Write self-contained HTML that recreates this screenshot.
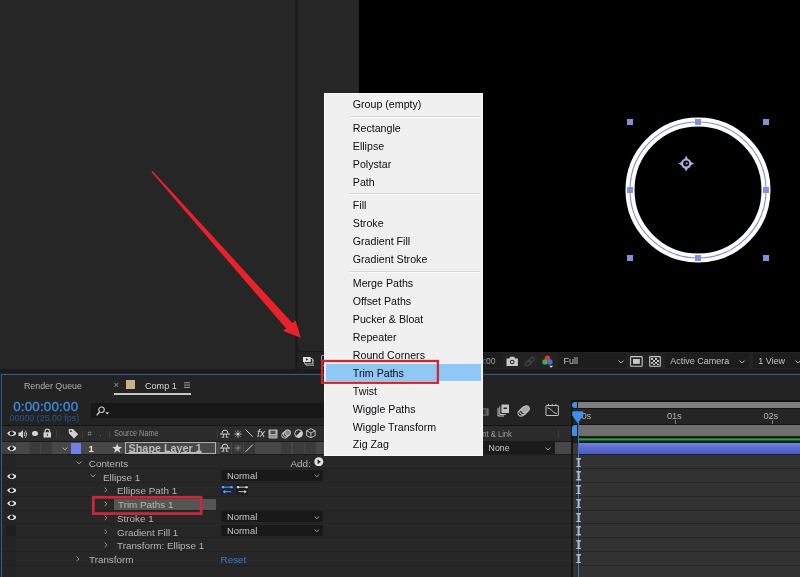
<!DOCTYPE html>
<html>
<head>
<meta charset="utf-8">
<title>After Effects - Add Trim Paths</title>
<style>
*{margin:0;padding:0;box-sizing:border-box;}
html,body{width:800px;height:577px;overflow:hidden;background:#262626;}
body{position:relative;font-family:"Liberation Sans",sans-serif;color:#b4b4b4;}
#root{position:absolute;left:0;top:0;width:800px;height:577px;will-change:transform;}
.a{position:absolute;}
.t{position:absolute;white-space:nowrap;line-height:1;}
#divider{left:295px;top:0;width:3px;height:370px;background:#1b1b1b;}
#viewer{left:359px;top:0;width:441px;height:351.6px;background:#000;}
#vfoot{left:298px;top:352px;width:502px;height:18px;background:#232323;}
#vfootline{left:298px;top:351.3px;width:61px;height:1px;background:#171717;}
#gap{left:0;top:369.4px;width:800px;height:4.4px;background:#1b1b1b;}
#tl{left:0;top:373px;width:800px;height:204px;background:#232323;}
#tlblueT{left:1px;top:373.7px;width:799px;height:1.4px;background:#2d5892;}
#tlblueL{left:0.9px;top:373.7px;width:1.2px;height:204px;background:#2d5892;}
.rl{position:absolute;left:2px;width:569px;height:1px;background:#212121;}
.rt{position:absolute;left:573px;width:227px;height:1px;background:#262626;}
#tlleft{left:2px;top:455px;width:569px;height:122px;background:#272727;}
#track{left:573px;top:455px;width:227px;height:122px;background:#323232;}
#tdiv{left:571px;top:400px;width:1.6px;height:177px;background:#141414;}
.lt{position:absolute;white-space:nowrap;font-size:9.85px;line-height:13.75px;height:13.75px;color:#b6b6b6;}
#tabline{left:113.8px;top:393px;width:77px;height:1.5px;background:#c6c6c6;}
#search{left:90.5px;top:403px;width:380px;height:14.5px;background:#171717;border-radius:2px;}
#hdrline{left:2px;top:424.6px;width:569px;height:1.2px;background:#151515;}
#hdr{left:2px;top:425.8px;width:569px;height:15px;background:#2b2b2b;}
#hdrline2{left:2px;top:440.8px;width:569px;height:1px;background:#1a1a1a;}
#lrow{left:2px;top:441.8px;width:569px;height:12.6px;background:#474747;}
#lrowline{left:2px;top:454.4px;width:569px;height:1px;background:#1c1c1c;}
.cell{position:absolute;top:441.8px;height:12.6px;background:#3b3b3b;}
.vs{position:absolute;top:429.6px;width:1px;height:8.6px;background:#3c3c3c;}
.dd{position:absolute;left:220.8px;width:102.4px;height:11.2px;background:#191919;border-radius:1.5px;}
.ddt{position:absolute;font-size:9.9px;line-height:10.8px;color:#c6c6c6;white-space:nowrap;transform:scaleX(0.95);transform-origin:0 50%;}
.vb{position:absolute;top:353.4px;height:14.6px;background:#1d1d1d;border-radius:1.5px;}
.vt{position:absolute;top:357.4px;font-size:9px;line-height:1;color:#c4c4c4;white-space:nowrap;}
#menu{left:324px;top:92.8px;width:159px;height:363px;background:#f0f0f0;border:1px solid #f9f9f9;}
.mi{position:absolute;left:27.8px;margin-top:0.1px;font-size:10.65px;letter-spacing:0;color:#0a0a10;white-space:nowrap;line-height:18px;height:18px;}
.ms{position:absolute;left:24.5px;width:130.6px;height:1px;background:#d7d7d7;border-bottom:0.6px solid #fbfbfb;box-sizing:content-box;}
#mhl{left:0.5px;top:270px;width:155.5px;height:17.6px;background:#8fc7f5;}
</style>
</head>
<body>
<div id="root">
<div class="a" id="divider"></div><div class="a" id="viewer"></div><div class="a" id="vfoot"></div><div class="a" id="vfootline"></div><div class="a" id="gap"></div>
<div class="a" id="tl"></div><div class="a" id="tlblueT"></div><div class="a" id="tlblueL"></div>
<div class="a" id="tlleft"></div><div class="a" id="track"></div><div class="a" style="left:3px;top:455px;width:12.6px;height:122px;background:#242425"></div>
<div class="rl" style="top:468.45px"></div><div class="rt" style="top:468.45px"></div>
<div class="rl" style="top:482.20px"></div><div class="rt" style="top:482.20px"></div>
<div class="rl" style="top:495.95px"></div><div class="rt" style="top:495.95px"></div>
<div class="rl" style="top:509.70px"></div><div class="rt" style="top:509.70px"></div>
<div class="rl" style="top:523.45px"></div><div class="rt" style="top:523.45px"></div>
<div class="rl" style="top:537.20px"></div><div class="rt" style="top:537.20px"></div>
<div class="rl" style="top:550.95px"></div><div class="rt" style="top:550.95px"></div>
<div class="rl" style="top:564.70px"></div><div class="rt" style="top:564.70px"></div>
<div class="t" style="left:23.6px;top:380.7px;font-size:9.8px;color:#b0b0b0;transform:scaleX(0.9);transform-origin:0 0">Render Queue</div>
<div class="t" style="left:113.6px;top:380.2px;font-size:9.5px;color:#a0a0a0">×</div>
<div class="a" style="left:126.3px;top:380.4px;width:8.8px;height:8.8px;background:#c8b088"></div>
<div class="t" style="left:144.6px;top:380.7px;font-size:9.8px;color:#d8d8d8;transform:scaleX(0.925);transform-origin:0 0">Comp 1</div>
<svg class="a" style="left:183.8px;top:382.4px" width="6.4" height="6.2" viewBox="0 0 13 12"><path d="M0 1.3H13M0 6H13M0 10.7H13" stroke="#c8c8c8" stroke-width="1.5"/></svg>
<div class="a" id="tabline"></div>
<div class="t" style="left:13.2px;top:399.5px;font-size:13.4px;letter-spacing:0.18px;color:#3d8ee0;-webkit-text-stroke:0.3px #3d8ee0">0:00:00:00</div>
<div class="t" style="left:9.6px;top:414.4px;font-size:8.9px;color:#27568f">00000 (25.00 fps)</div>
<div class="a" id="search"></div>
<svg class="a" style="left:95.6px;top:405.6px" width="14" height="10" viewBox="0 0 28 20"><circle cx="11" cy="7.5" r="5.5" fill="none" stroke="#cfcfcf" stroke-width="2.2"/><path d="M7 12 L1.5 18.5" stroke="#cfcfcf" stroke-width="2.6"/><path d="M18.5 12.5 H26.5 L22.5 17 Z" fill="#cfcfcf"/></svg>
<div class="a" id="hdrline"></div><div class="a" id="hdr"></div><div class="a" id="hdrline2"></div>
<svg class="a" style="left:6.5px;top:430.1px" width="9.8" height="6.6" viewBox="0 0 20 13"><path d="M0.3 6.5 C4.5 -0.6 15.5 -0.6 19.7 6.5 C15.5 13.6 4.5 13.6 0.3 6.5 Z" fill="#dcdcdc"/><circle cx="9.6" cy="6.4" r="4.1" fill="#161616"/><circle cx="10.6" cy="5" r="0.9" fill="#dcdcdc" opacity="0.55"/></svg>
<svg class="a" style="left:18px;top:428.6px" width="10.4" height="10.4" viewBox="0 0 21 21"><path d="M1 7 H5 L10 2 V19 L5 14 H1 Z" fill="#d4d4d4"/><path d="M12.5 6.5 Q15.5 10.5 12.5 14.5" fill="none" stroke="#d4d4d4" stroke-width="1.8"/><path d="M15 3.5 Q20.5 10.5 15 17.5" fill="none" stroke="#d4d4d4" stroke-width="1.8"/></svg>
<div class="a" style="left:32px;top:430.9px;width:5.6px;height:5.6px;border-radius:50%;background:#d4d4d4"></div>
<svg class="a" style="left:42.6px;top:428.2px" width="8.6" height="10" viewBox="0 0 17 20"><path d="M4 9 V6.5 A4.5 4.5 0 0 1 13 6.5 V9" fill="none" stroke="#d4d4d4" stroke-width="2.4"/><rect x="1" y="8.5" width="15" height="10.5" rx="1" fill="#d4d4d4"/><rect x="7.6" y="11.5" width="1.8" height="4.5" fill="#282828"/></svg>
<div class="vs" style="left:56.4px"></div>
<svg class="a" style="left:67.8px;top:427.8px" width="11" height="11.4" viewBox="0 0 21 21"><path d="M1.5 1.5 H9.5 L19.5 11.5 L11.5 19.5 L1.5 9.5 Z" fill="#cfcfcf"/><circle cx="5.6" cy="5.6" r="1.7" fill="#282828"/></svg>
<div class="vs" style="left:82.2px"></div>
<div class="t" style="left:87.4px;top:430.2px;font-size:7.4px;font-style:italic;color:#909090">#</div>
<div class="t" style="left:99.6px;top:430.2px;font-size:7.4px;color:#909090">.</div>
<div class="vs" style="left:109.4px"></div>
<div class="t" style="left:114.4px;top:429px;font-size:9px;color:#969696;transform:scaleX(0.81);transform-origin:0 0">Source Name</div>
<div class="vs" style="left:217px"></div>
<div class="a" id="lrow"></div><div class="a" id="lrowline"></div>
<div class="cell" style="left:2.4px;width:13.2px;background:#3f3f3f"></div>
<div class="cell" style="left:29.6px;width:10.4px"></div><div class="cell" style="left:41.4px;width:10.4px"></div>
<svg class="a" style="left:6.5px;top:445.1px" width="9.8" height="6.6" viewBox="0 0 20 13"><path d="M0.3 6.5 C4.5 -0.6 15.5 -0.6 19.7 6.5 C15.5 13.6 4.5 13.6 0.3 6.5 Z" fill="#e8e8e8"/><circle cx="9.6" cy="6.4" r="4.1" fill="#161616"/><circle cx="10.6" cy="5" r="0.9" fill="#e8e8e8" opacity="0.55"/></svg>
<svg class="a" style="left:62.2px;top:446.8px" width="6" height="3.4" viewBox="0 0 12 7"><path d="M1 1 L6 6 L11 1" fill="none" stroke="#b8b8b8" stroke-width="1.9"/></svg>
<div class="a" style="left:71px;top:443px;width:10px;height:10.6px;background:#6f80e6"></div>
<div class="t" style="left:88.6px;top:443.6px;font-size:9.6px;font-weight:bold;color:#e4e4e4">1</div>
<svg class="a" style="left:112.4px;top:443.4px" width="10.4" height="10" viewBox="0 0 20 19"><path d="M10 0.5 L12.4 7.2 L19.5 7.4 L13.9 11.8 L15.9 18.6 L10 14.6 L4.1 18.6 L6.1 11.8 L0.5 7.4 L7.6 7.2 Z" fill="#d8d8d8"/></svg>
<div class="a" style="left:125.4px;top:442.3px;width:90.4px;height:12px;border:1px solid #b4b4b4;background:#484848;overflow:hidden"><div class="t" style="left:2.2px;top:0.2px;font-size:10.8px;font-weight:bold;color:#bcbcbc;text-decoration:underline;text-decoration-thickness:1px;text-underline-offset:0.2px">Shape Layer 1</div></div>
<svg class="a" style="left:6.5px;top:472.85px" width="9.8" height="6.6" viewBox="0 0 20 13"><path d="M0.3 6.5 C4.5 -0.6 15.5 -0.6 19.7 6.5 C15.5 13.6 4.5 13.6 0.3 6.5 Z" fill="#e4e4e4"/><circle cx="9.6" cy="6.4" r="4.1" fill="#161616"/><circle cx="10.6" cy="5" r="0.9" fill="#e4e4e4" opacity="0.55"/></svg>
<svg class="a" style="left:6.5px;top:486.6px" width="9.8" height="6.6" viewBox="0 0 20 13"><path d="M0.3 6.5 C4.5 -0.6 15.5 -0.6 19.7 6.5 C15.5 13.6 4.5 13.6 0.3 6.5 Z" fill="#e4e4e4"/><circle cx="9.6" cy="6.4" r="4.1" fill="#161616"/><circle cx="10.6" cy="5" r="0.9" fill="#e4e4e4" opacity="0.55"/></svg>
<svg class="a" style="left:6.5px;top:500.35px" width="9.8" height="6.6" viewBox="0 0 20 13"><path d="M0.3 6.5 C4.5 -0.6 15.5 -0.6 19.7 6.5 C15.5 13.6 4.5 13.6 0.3 6.5 Z" fill="#e4e4e4"/><circle cx="9.6" cy="6.4" r="4.1" fill="#161616"/><circle cx="10.6" cy="5" r="0.9" fill="#e4e4e4" opacity="0.55"/></svg>
<svg class="a" style="left:6.5px;top:514.1px" width="9.8" height="6.6" viewBox="0 0 20 13"><path d="M0.3 6.5 C4.5 -0.6 15.5 -0.6 19.7 6.5 C15.5 13.6 4.5 13.6 0.3 6.5 Z" fill="#e4e4e4"/><circle cx="9.6" cy="6.4" r="4.1" fill="#161616"/><circle cx="10.6" cy="5" r="0.9" fill="#e4e4e4" opacity="0.55"/></svg>
<div class="a" style="left:5.6px;top:526.05px;width:10.6px;height:10.4px;background:#1e1e1e"></div>
<svg class="a" style="left:76.2px;top:460.6px" width="6" height="3.4" viewBox="0 0 12 7"><path d="M1 1 L6 6 L11 1" fill="none" stroke="#a8a8a8" stroke-width="1.9"/></svg>
<svg class="a" style="left:90px;top:474.35px" width="6" height="3.4" viewBox="0 0 12 7"><path d="M1 1 L6 6 L11 1" fill="none" stroke="#a8a8a8" stroke-width="1.9"/></svg>
<svg class="a" style="left:103.8px;top:487.4px" width="3.4" height="5.8" viewBox="0 0 7 12"><path d="M1 1 L6 6 L1 11" fill="none" stroke="#9c9c9c" stroke-width="1.9"/></svg>
<svg class="a" style="left:103.8px;top:501.15px" width="3.4" height="5.8" viewBox="0 0 7 12"><path d="M1 1 L6 6 L1 11" fill="none" stroke="#9c9c9c" stroke-width="1.9"/></svg>
<svg class="a" style="left:103.8px;top:514.9px" width="3.4" height="5.8" viewBox="0 0 7 12"><path d="M1 1 L6 6 L1 11" fill="none" stroke="#9c9c9c" stroke-width="1.9"/></svg>
<svg class="a" style="left:103.8px;top:528.65px" width="3.4" height="5.8" viewBox="0 0 7 12"><path d="M1 1 L6 6 L1 11" fill="none" stroke="#9c9c9c" stroke-width="1.9"/></svg>
<svg class="a" style="left:103.8px;top:542.4px" width="3.4" height="5.8" viewBox="0 0 7 12"><path d="M1 1 L6 6 L1 11" fill="none" stroke="#9c9c9c" stroke-width="1.9"/></svg>
<svg class="a" style="left:75.6px;top:556.15px" width="3.4" height="5.8" viewBox="0 0 7 12"><path d="M1 1 L6 6 L1 11" fill="none" stroke="#9c9c9c" stroke-width="1.9"/></svg>
<div class="a" style="left:113.8px;top:499.35px;width:102px;height:11px;background:#555555"></div>
<div class="lt" style="left:88.8px;top:456.80px">Contents</div>
<div class="lt" style="left:103px;top:470.55px">Ellipse 1</div>
<div class="lt" style="left:117px;top:484.30px">Ellipse Path 1</div>
<div class="lt" style="left:118px;top:498.05px">Trim Paths 1</div>
<div class="lt" style="left:117px;top:511.80px">Stroke 1</div>
<div class="lt" style="left:117px;top:525.55px">Gradient Fill 1</div>
<div class="lt" style="left:117px;top:539.30px">Transform: Ellipse 1</div>
<div class="lt" style="left:89px;top:553.05px">Transform</div>
<svg class="a" style="left:220px;top:428.8px" width="10" height="9.6" viewBox="0 0 20 19"><path d="M4 9 Q4 2 10 2 Q16 2 16 9" fill="none" stroke="#cfcfcf" stroke-width="2"/><path d="M0 10 H20" stroke="#cfcfcf" stroke-width="2"/><path d="M7.2 10 V16 M12.8 10 V16 M3.2 16.4 H8.2 M11.8 16.4 H16.8" stroke="#cfcfcf" stroke-width="1.7"/></svg>
<svg class="a" style="left:233.6px;top:429.6px" width="8" height="8" viewBox="0 0 16 16"><circle cx="8" cy="8" r="3.2" fill="#cfcfcf"/><path d="M8 0.8 V4 M8 12 V15.2 M0.8 8 H4 M12 8 H15.2 M2.9 2.9 L5 5 M11 11 L13.1 13.1 M13.1 2.9 L11 5 M5 11 L2.9 13.1" stroke="#cfcfcf" stroke-width="1.7"/></svg>
<svg class="a" style="left:245px;top:429.4px" width="8.2" height="8.2" viewBox="0 0 16 16"><path d="M1 1 L15 15" stroke="#cfcfcf" stroke-width="1.9"/></svg>
<div class="t" style="left:257px;top:427.6px;font-size:10.8px;font-style:italic;color:#cfcfcf;letter-spacing:-0.2px">fx</div>
<svg class="a" style="left:268px;top:428.6px" width="10" height="10" viewBox="0 0 20 20"><rect x="1" y="1" width="18" height="18" rx="1.5" fill="#b8b8b8"/><rect x="5" y="3.5" width="10" height="6.5" fill="#4a4a4a"/><path d="M3 13 H17 M3 16 H17" stroke="#6a6a6a" stroke-width="1.4"/></svg>
<svg class="a" style="left:281px;top:428.6px" width="10.4" height="10" viewBox="0 0 21 20"><circle cx="7.5" cy="12.5" r="6" fill="none" stroke="#cfcfcf" stroke-width="1.8"/><circle cx="10.5" cy="10" r="6" fill="none" stroke="#cfcfcf" stroke-width="1.8"/><circle cx="13.5" cy="7.5" r="6" fill="#8a8a8a" stroke="#cfcfcf" stroke-width="1.8"/></svg>
<svg class="a" style="left:293.6px;top:429px" width="9.2" height="9.2" viewBox="0 0 18 18"><circle cx="9" cy="9" r="7.6" fill="none" stroke="#cfcfcf" stroke-width="1.8"/><path d="M3.6 14.4 A7.6 7.6 0 0 0 14.4 3.6 Z" fill="#cfcfcf"/></svg>
<svg class="a" style="left:306px;top:428.4px" width="9.8" height="10.4" viewBox="0 0 19 20"><path d="M9.5 1.2 L17.8 5.4 V14.6 L9.5 18.8 L1.2 14.6 V5.4 Z M1.2 5.4 L9.5 9.6 L17.8 5.4 M9.5 9.6 V18.8" fill="none" stroke="#cfcfcf" stroke-width="1.7" stroke-linejoin="round"/></svg>
<div class="cell" style="left:219.6px;width:11.4px;background:#363636"></div>
<div class="cell" style="left:232.2px;width:10.6px;background:#363636"></div>
<div class="cell" style="left:243.8px;width:11.2px;background:#363636"></div>
<div class="cell" style="left:280.6px;width:10.4px;background:#3c3c3c"></div>
<div class="cell" style="left:292.7px;width:11.2px;background:#3c3c3c"></div>
<div class="cell" style="left:305.3px;width:10.8px;background:#3c3c3c"></div>
<svg class="a" style="left:220.2px;top:443.4px" width="10" height="9.6" viewBox="0 0 20 19"><path d="M4 9 Q4 2 10 2 Q16 2 16 9" fill="none" stroke="#d8d8d8" stroke-width="2"/><path d="M0 10 H20" stroke="#d8d8d8" stroke-width="2"/><path d="M7.2 10 V16 M12.8 10 V16 M3.2 16.4 H8.2 M11.8 16.4 H16.8" stroke="#d8d8d8" stroke-width="1.7"/></svg>
<svg class="a" style="left:233.6px;top:444.2px" width="8" height="8" viewBox="0 0 16 16"><circle cx="8" cy="8" r="3.2" fill="#7c7c7c"/><path d="M8 0.8 V4 M8 12 V15.2 M0.8 8 H4 M12 8 H15.2 M2.9 2.9 L5 5 M11 11 L13.1 13.1 M13.1 2.9 L11 5 M5 11 L2.9 13.1" stroke="#7c7c7c" stroke-width="1.7"/></svg>
<svg class="a" style="left:245.4px;top:444px" width="8.4" height="8.4" viewBox="0 0 16 16"><path d="M1 15 L15 1" stroke="#dadada" stroke-width="1.9"/></svg>
<div class="t" style="left:290.4px;top:458.60px;font-size:9.85px;color:#b6b6b6">Add:</div>
<svg class="a" style="left:314.4px;top:456.60px" width="9.6" height="9.6" viewBox="0 0 20 20"><circle cx="10" cy="10" r="9.4" fill="#e2e2e2"/><path d="M7.4 5 L14.6 10 L7.4 15 Z" fill="#262626"/></svg>
<div class="dd" style="top:470.05px"></div>
<div class="ddt" style="left:226.6px;top:470.65px">Normal</div>
<svg class="a" style="left:313.8px;top:474.35px" width="5.8" height="3.2" viewBox="0 0 12 7"><path d="M1 1 L6 6 L11 1" fill="none" stroke="#b0b0b0" stroke-width="1.9"/></svg>
<div class="dd" style="top:511.30px"></div>
<div class="ddt" style="left:226.6px;top:511.90px">Normal</div>
<svg class="a" style="left:313.8px;top:515.6px" width="5.8" height="3.2" viewBox="0 0 12 7"><path d="M1 1 L6 6 L11 1" fill="none" stroke="#b0b0b0" stroke-width="1.9"/></svg>
<div class="dd" style="top:525.05px"></div>
<div class="ddt" style="left:226.6px;top:525.65px">Normal</div>
<svg class="a" style="left:313.8px;top:529.35px" width="5.8" height="3.2" viewBox="0 0 12 7"><path d="M1 1 L6 6 L11 1" fill="none" stroke="#b0b0b0" stroke-width="1.9"/></svg>
<svg class="a" style="left:221.2px;top:483.90px" width="12.6" height="10.8" viewBox="0 0 25 21"><rect width="25" height="21" fill="#142440"/><path d="M5 6 H20 M5 15 H20" stroke="#72aaea" stroke-width="1.8"/><circle cx="4" cy="6" r="2.4" fill="#72aaea"/><circle cx="21" cy="6" r="2.4" fill="#72aaea"/><path d="M8.5 11.5 L3.5 15 L8.5 18.5 Z" fill="#72aaea"/></svg>
<svg class="a" style="left:235.6px;top:483.90px" width="12.6" height="10.8" viewBox="0 0 25 21"><rect width="25" height="21" fill="#1a1a1a"/><path d="M5 6 H20 M5 15 H20" stroke="#d8d8d8" stroke-width="1.8"/><circle cx="4" cy="6" r="2.4" fill="#d8d8d8"/><circle cx="21" cy="6" r="2.4" fill="#d8d8d8"/><path d="M16.5 11.5 L21.5 15 L16.5 18.5 Z" fill="#d8d8d8"/></svg>
<div class="t" style="left:220.6px;top:554.65px;font-size:9.85px;color:#3180d4">Reset</div>
<div class="a" id="tdiv"></div>
<svg class="a" style="left:478px;top:405px" width="11" height="11" viewBox="0 0 22 22"><rect x="6" y="8" width="14" height="12" fill="none" stroke="#8a8a8a" stroke-width="2"/><path d="M13 12 H20 M13 16 H20" stroke="#8a8a8a" stroke-width="1.6"/></svg>
<svg class="a" style="left:496.6px;top:403.6px" width="13" height="13" viewBox="0 0 26 26"><path d="M2 8 V24 H14" fill="none" stroke="#c4c4c4" stroke-width="2"/><path d="M5.5 5 V21 H17.5" fill="none" stroke="#c4c4c4" stroke-width="2"/><rect x="9" y="1" width="15" height="17" rx="1" fill="#c4c4c4"/><rect x="13" y="7" width="7" height="3" fill="#232323"/></svg>
<svg class="a" style="left:517px;top:403.6px" width="13.4" height="13" viewBox="0 0 27 26"><ellipse cx="10" cy="17.5" rx="8.2" ry="6.2" fill="none" stroke="#c4c4c4" stroke-width="1.9" transform="rotate(-25 10 17.5)"/><ellipse cx="13.5" cy="14" rx="8.2" ry="6.2" fill="none" stroke="#c4c4c4" stroke-width="1.9" transform="rotate(-25 13.5 14)"/><ellipse cx="17" cy="10.5" rx="8.2" ry="6.2" fill="#a8a8a8" stroke="#c4c4c4" stroke-width="1.9" transform="rotate(-25 17 10.5)"/></svg>
<svg class="a" style="left:544.6px;top:403.4px" width="14.4" height="13.6" viewBox="0 0 29 27"><rect x="2" y="5" width="25" height="20" rx="1" fill="none" stroke="#c4c4c4" stroke-width="2"/><path d="M7 1.5 V6 M14.5 1.5 V6 M22 1.5 V6" stroke="#c4c4c4" stroke-width="2"/><path d="M5 9.5 C14 9.5 14 21 24 21" fill="none" stroke="#c4c4c4" stroke-width="2"/></svg>
<div class="t" style="left:466.2px;top:429.8px;font-size:9px;color:#9c9c9c;transform:scaleX(0.85);transform-origin:0 0">Parent &amp; Link</div>
<div class="vs" style="left:558px"></div>
<div class="a" style="left:470px;top:442px;width:85px;height:12.3px;background:#1b1b1b;border-radius:1px"></div>
<div class="t" style="left:488.6px;top:444px;font-size:8.8px;color:#cacaca">None</div>
<svg class="a" style="left:545px;top:446.8px" width="6" height="3.4" viewBox="0 0 12 7"><path d="M1 1 L6 6 L11 1" fill="none" stroke="#b0b0b0" stroke-width="1.9"/></svg>
<div class="a" style="left:573px;top:400.2px;width:227px;height:1.8px;background:#121212"></div>
<div class="a" style="left:572.6px;top:402px;width:6px;height:5.6px;background:#1a1a1a"></div><div class="a" style="left:577.6px;top:402px;width:222.4px;height:5.6px;background:#7e7e7e"></div>
<div class="a" style="left:572.4px;top:401.6px;width:4.8px;height:6.4px;background:#3f8fe6;border-radius:3.2px 0 0 3.2px"></div>
<div class="a" style="left:573px;top:407.6px;width:227px;height:1.4px;background:#141414"></div>
<div class="a" style="left:573px;top:409px;width:227px;height:14.8px;background:#252525"></div>
<div class="a" style="left:573px;top:423.8px;width:227px;height:1.2px;background:#141414"></div>
<div class="a" style="left:572.6px;top:425px;width:6px;height:11.4px;background:#1c1c1c"></div><div class="a" style="left:577.6px;top:425px;width:222.4px;height:11.4px;background:#6e6e6e"></div>
<div class="a" style="left:572.4px;top:425.2px;width:4.8px;height:11.6px;background:#3f8fe6;border-radius:3.2px 0 0 3.2px"></div>
<div class="a" style="left:573px;top:436.4px;width:227px;height:1.2px;background:#1a1a1a"></div>
<div class="a" style="left:578.2px;top:437.6px;width:221.8px;height:3.6px;background:#27a83c;border-top:0.8px solid #1a6e26;border-bottom:0.8px solid #176022"></div>
<div class="a" style="left:573px;top:441px;width:227px;height:1.6px;background:#1c1c1c"></div>
<div class="a" style="left:573px;top:442.6px;width:227px;height:12px;background:#3a3a3a"></div>
<div class="a" style="left:578px;top:442.6px;width:222px;height:11.8px;background:linear-gradient(#7686e4,#5a6ad0 45%,#4d5cc0)"></div>
<div class="a" style="left:573px;top:454.4px;width:227px;height:1px;background:#1f1f1f"></div>
<div class="a" style="left:675px;top:420.2px;width:1px;height:3.6px;background:#808080"></div>
<div class="t" style="left:667px;top:410.8px;font-size:9.4px;color:#b2b2b2;letter-spacing:-0.2px">01s</div>
<div class="a" style="left:771.6px;top:420.2px;width:1px;height:3.6px;background:#808080"></div>
<div class="t" style="left:763.6px;top:410.8px;font-size:9.4px;color:#b2b2b2;letter-spacing:-0.2px">02s</div>
<div class="t" style="left:576.4px;top:410.8px;font-size:9.4px;color:#b2b2b2;letter-spacing:-0.2px">00s</div>
<div class="a" style="left:577.8px;top:422px;width:1.2px;height:155px;background:#3a78c2"></div>
<svg class="a" style="left:572.4px;top:411.4px" width="11.6" height="12.6" viewBox="0 0 23 25"><path d="M3 0.5 H20 Q22.5 0.5 22.5 3 V9 L11.5 24.5 L0.5 9 V3 Q0.5 0.5 3 0.5 Z" fill="#3f8fe6"/></svg>
<svg class="a" style="left:575.8px;top:457.60px" width="5.2" height="9.4" viewBox="0 0 10 19"><path d="M0.3 1.4 H9.7 M0.3 17.6 H9.7" stroke="#a9bbd6" stroke-width="2.8"/><path d="M5 1 V18" stroke="#a9bbd6" stroke-width="4.2"/></svg>
<svg class="a" style="left:575.8px;top:471.35px" width="5.2" height="9.4" viewBox="0 0 10 19"><path d="M0.3 1.4 H9.7 M0.3 17.6 H9.7" stroke="#a9bbd6" stroke-width="2.8"/><path d="M5 1 V18" stroke="#a9bbd6" stroke-width="4.2"/></svg>
<svg class="a" style="left:575.8px;top:485.10px" width="5.2" height="9.4" viewBox="0 0 10 19"><path d="M0.3 1.4 H9.7 M0.3 17.6 H9.7" stroke="#a9bbd6" stroke-width="2.8"/><path d="M5 1 V18" stroke="#a9bbd6" stroke-width="4.2"/></svg>
<svg class="a" style="left:575.8px;top:498.85px" width="5.2" height="9.4" viewBox="0 0 10 19"><path d="M0.3 1.4 H9.7 M0.3 17.6 H9.7" stroke="#a9bbd6" stroke-width="2.8"/><path d="M5 1 V18" stroke="#a9bbd6" stroke-width="4.2"/></svg>
<svg class="a" style="left:575.8px;top:512.60px" width="5.2" height="9.4" viewBox="0 0 10 19"><path d="M0.3 1.4 H9.7 M0.3 17.6 H9.7" stroke="#a9bbd6" stroke-width="2.8"/><path d="M5 1 V18" stroke="#a9bbd6" stroke-width="4.2"/></svg>
<svg class="a" style="left:575.8px;top:526.35px" width="5.2" height="9.4" viewBox="0 0 10 19"><path d="M0.3 1.4 H9.7 M0.3 17.6 H9.7" stroke="#a9bbd6" stroke-width="2.8"/><path d="M5 1 V18" stroke="#a9bbd6" stroke-width="4.2"/></svg>
<svg class="a" style="left:575.8px;top:540.10px" width="5.2" height="9.4" viewBox="0 0 10 19"><path d="M0.3 1.4 H9.7 M0.3 17.6 H9.7" stroke="#a9bbd6" stroke-width="2.8"/><path d="M5 1 V18" stroke="#a9bbd6" stroke-width="4.2"/></svg>
<svg class="a" style="left:575.8px;top:553.85px" width="5.2" height="9.4" viewBox="0 0 10 19"><path d="M0.3 1.4 H9.7 M0.3 17.6 H9.7" stroke="#a9bbd6" stroke-width="2.8"/><path d="M5 1 V18" stroke="#a9bbd6" stroke-width="4.2"/></svg>
<svg class="a" style="left:600px;top:100px" width="200" height="180" viewBox="600 100 200 180"><circle cx="698" cy="190" r="68" fill="none" stroke="#ffffff" stroke-width="9"/><circle cx="698" cy="190" r="68" fill="none" stroke="#7f8be0" stroke-width="1.1"/><rect x="627" y="119" width="6" height="6" fill="#8390dc"/><rect x="627" y="187" width="6" height="6" fill="#8390dc"/><rect x="627" y="255" width="6" height="6" fill="#8390dc"/><rect x="695" y="119" width="6" height="6" fill="#8390dc"/><rect x="695" y="255" width="6" height="6" fill="#8390dc"/><rect x="763" y="119" width="6" height="6" fill="#8390dc"/><rect x="763" y="187" width="6" height="6" fill="#8390dc"/><rect x="763" y="255" width="6" height="6" fill="#8390dc"/><g transform="translate(686.2 163.6)"><path d="M0 -8 L2.2 -3.6 L-2.2 -3.6 Z M0 8 L2.2 3.6 L-2.2 3.6 Z M-8 0 L-3.6 -2.2 L-3.6 2.2 Z M8 0 L3.6 -2.2 L3.6 2.2 Z" fill="#a9b1e6"/><circle r="4.1" fill="none" stroke="#a9b1e6" stroke-width="2.2"/><circle r="1.9" fill="#1a1a2a"/><circle cx="0.6" cy="-0.4" r="0.8" fill="#e8e8ff"/></g></svg>
<svg class="a" style="left:302.8px;top:356.8px" width="11.4" height="8.8" viewBox="0 0 114 88"><path d="M30 64 V82 H110 V30 H94" fill="none" stroke="#c8c8c8" stroke-width="8"/><path d="M16 50 V68 H96 V16 H80" fill="none" stroke="#c8c8c8" stroke-width="8"/><rect x="0" y="0" width="78" height="50" fill="#e0e0e0"/><path d="M30 12 L52 25 L30 38 Z" fill="#232323"/></svg>
<div class="a" style="left:320.6px;top:355.4px;width:6px;height:11px;border:1px solid #9a9a9a;border-radius:1px"></div>
<div class="vb" style="left:440px;width:62.6px"></div>
<div class="vt" style="left:455px;top:357px;font-size:8.6px;color:#9c9c9c">0:00:00:00</div>
<svg class="a" style="left:505.8px;top:356.4px" width="12.4" height="10.4" viewBox="0 0 25 21"><path d="M1 5 H6.5 L8.5 1.5 H16.5 L18.5 5 H24 V20 H1 Z" fill="#c8c8c8"/><circle cx="12.5" cy="12" r="4.6" fill="#232323"/><circle cx="12.5" cy="12" r="2.6" fill="#c8c8c8"/></svg>
<svg class="a" style="left:524px;top:355.8px" width="11.6" height="11.4" viewBox="0 0 23 23"><ellipse cx="8" cy="15" rx="6.4" ry="4" fill="none" stroke="#484848" stroke-width="2.2" transform="rotate(-35 8 15)"/><ellipse cx="15" cy="8" rx="6.4" ry="4" fill="none" stroke="#484848" stroke-width="2.2" transform="rotate(-35 15 8)"/></svg>
<svg class="a" style="left:542.4px;top:354.8px" width="11.4" height="13" viewBox="0 0 23 26"><circle cx="11" cy="6.5" r="5.6" fill="#d93438"/><circle cx="6.2" cy="14" r="5.6" fill="#40ac4a"/><circle cx="15.8" cy="14" r="5.6" fill="#4f6ad8"/><path d="M14.5 21.5 H22.5 L18.5 25.5 Z" fill="#e6e6e6"/></svg>
<div class="vb" style="left:558px;width:68px"></div>
<div class="vt" style="left:563.6px">Full</div>
<svg class="a" style="left:618px;top:359.6px" width="6.2" height="3.6" viewBox="0 0 12 7"><path d="M1 1 L6 6 L11 1" fill="none" stroke="#b8b8b8" stroke-width="1.9"/></svg>
<svg class="a" style="left:630.4px;top:355.8px" width="12.8" height="10.8" viewBox="0 0 26 22"><rect x="1.2" y="1.2" width="23.6" height="19.6" rx="1.5" fill="none" stroke="#c8c8c8" stroke-width="2.2"/><rect x="6" y="6" width="14" height="10" fill="#c8c8c8"/></svg>
<svg class="a" style="left:648.6px;top:355.8px" width="12" height="10.8" viewBox="0 0 24 22"><rect x="1.2" y="1.2" width="21.6" height="19.6" rx="1.5" fill="none" stroke="#c8c8c8" stroke-width="2.2"/><path d="M4 4 H8 V8 H4 Z M12 4 H16 V8 H12 Z M8 8 H12 V12 H8 Z M16 8 H20 V12 H16 Z M4 12 H8 V16 H4 Z M12 12 H16 V16 H12 Z M8 16 H12 V18.5 H8 Z M16 16 H20 V18.5 H16 Z" fill="#c8c8c8"/></svg>
<div class="vb" style="left:665px;width:84px"></div>
<div class="vt" style="left:670.2px">Active Camera</div>
<svg class="a" style="left:739.4px;top:359.6px" width="6.2" height="3.6" viewBox="0 0 12 7"><path d="M1 1 L6 6 L11 1" fill="none" stroke="#b8b8b8" stroke-width="1.9"/></svg>
<div class="vb" style="left:753.4px;width:50px"></div>
<div class="vt" style="left:758.2px">1 View</div>
<svg class="a" style="left:794.6px;top:359.6px" width="6.2" height="3.6" viewBox="0 0 12 7"><path d="M1 1 L6 6 L11 1" fill="none" stroke="#b8b8b8" stroke-width="1.9"/></svg>
<div class="a" id="menu"><div class="a" id="mhl"></div><div class="mi" style="top:1.3px">Group (empty)</div><div class="mi" style="top:25.3px">Rectangle</div><div class="mi" style="top:43.3px">Ellipse</div><div class="mi" style="top:61.3px">Polystar</div><div class="mi" style="top:79.3px">Path</div><div class="mi" style="top:102.3px">Fill</div><div class="mi" style="top:120.3px">Stroke</div><div class="mi" style="top:138.3px">Gradient Fill</div><div class="mi" style="top:156.3px">Gradient Stroke</div><div class="mi" style="top:180px">Merge Paths</div><div class="mi" style="top:198px">Offset Paths</div><div class="mi" style="top:215.9px">Pucker &amp; Bloat</div><div class="mi" style="top:233.8px">Repeater</div><div class="mi" style="top:251.8px">Round Corners</div><div class="mi" style="top:269.7px">Trim Paths</div><div class="mi" style="top:287.7px">Twist</div><div class="mi" style="top:305.7px">Wiggle Paths</div><div class="mi" style="top:323.7px">Wiggle Transform</div><div class="mi" style="top:341.5px">Zig Zag</div><div class="ms" style="top:22px"></div><div class="ms" style="top:99px"></div><div class="ms" style="top:177px"></div></div>
<svg class="a" style="left:0;top:0" width="800" height="577" viewBox="0 0 800 577">
<polygon points="152.6,170.9 292.4,323 295.6,320.5 300.8,337.8 283,331 286.2,328.5 151.4,172.1" fill="#e8212b"/>
<rect x="322.1" y="361" width="115.8" height="21.8" fill="none" stroke="#cc2832" stroke-width="2.3"/>
<rect x="93.3" y="497.3" width="107.8" height="16.3" fill="none" stroke="#c8283a" stroke-width="2.8"/>
</svg>
</div>
</body>
</html>
